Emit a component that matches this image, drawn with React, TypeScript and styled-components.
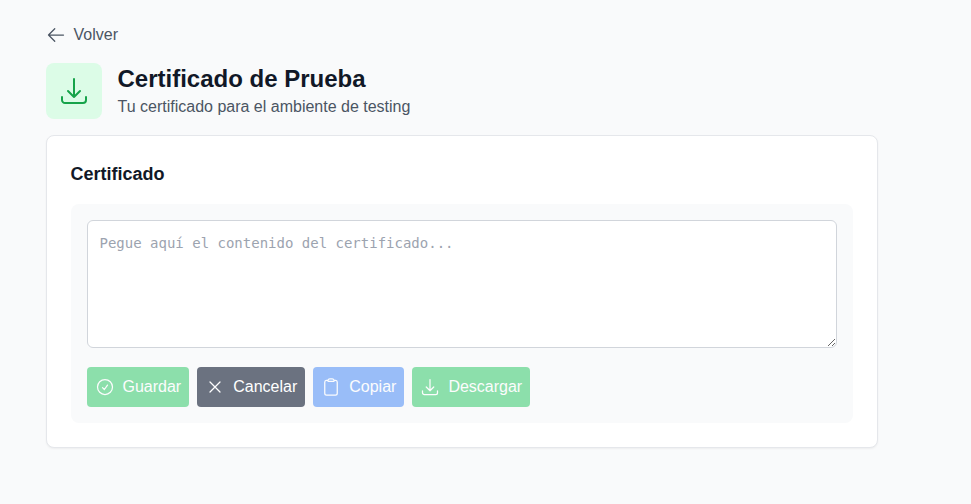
import React from "react";
import styled, { createGlobalStyle } from "styled-components";
import { HiOutlineArrowLeft } from "react-icons/hi2";
import { HiOutlineArrowDownTray, HiOutlineCheckCircle, HiOutlineXMark, HiOutlineClipboard } from "react-icons/hi2";

const GlobalStyle = createGlobalStyle`
  *, *::before, *::after { box-sizing: border-box; }
  body { margin: 0; background: #f9fafb; font-family: "Liberation Sans", Arial, sans-serif; font-size: 16px; line-height: 24px; color: #111827; }
  h1, h2, p { margin: 0; }
`;
const Page = styled.main`
  width: 832px;
  min-height: 504px;
  margin-left: 45.5px;
  padding-top: 23px;
`;
const BackButton = styled.button`
  display: flex;
  align-items: center;
  gap: 8px;
  padding: 0;
  margin-bottom: 16px;
  border: 0;
  background: none;
  color: #4b5563;
  font: inherit;
  svg { width: 20px; height: 20px; stroke-width: 1.5; }
`;
const Header = styled.header`
  display: flex;
  align-items: center;
  gap: 16px;
  margin-bottom: 16px;
`;
const IconTile = styled.div`
  display: grid;
  place-items: center;
  width: 56px;
  height: 56px;
  border-radius: 8px;
  background: #dcfce7;
  color: #16a34a;
  svg { width: 32px; height: 32px; }
`;
const Title = styled.h1`
  font-size: 24px;
  line-height: 32px;
  font-weight: 700;
`;
const Subtitle = styled.p`
  color: #4b5563;
`;
const Card = styled.section`
  padding: 24px;
  border: 1px solid #e5e7eb;
  border-radius: 8px;
  background: #fff;
  box-shadow: 0 1px 2px rgba(0, 0, 0, 0.05);
`;
const CardTitle = styled.h2`
  margin-bottom: 16px;
  font-size: 18px;
  line-height: 28px;
  font-weight: 600;
`;
const Panel = styled.div`
  padding: 16px;
  border-radius: 8px;
  background: #f9fafb;
`;
const CertificateInput = styled.textarea`
  display: block;
  width: 100%;
  height: 128px;
  padding: 12px;
  border: 1px solid #d1d5db;
  border-radius: 6px;
  background: #fff;
  font-family: "DejaVu Sans Mono", monospace;
  font-size: 14px;
  line-height: 20px;
  resize: vertical;
  &::placeholder { color: #9ca3af; opacity: 1; }
`;
const Actions = styled.div`
  display: flex;
  gap: 8px;
  margin-top: 19px;
`;
const ActionButton = styled.button<{ $color: string }>`
  display: flex;
  align-items: center;
  gap: 8px;
  height: 40px;
  padding: 8px;
  border: 0;
  border-radius: 4px;
  background: ${({ $color }) => $color};
  color: #fff;
  font: inherit;
  &:disabled { opacity: 0.5; }
  svg { width: 20px; height: 20px; }
`;

export default function App() {
  return (
    <>
      <GlobalStyle />
      <Page>
        <BackButton><HiOutlineArrowLeft />Volver</BackButton>
        <Header>
          <IconTile><HiOutlineArrowDownTray /></IconTile>
          <div>
            <Title>Certificado de Prueba</Title>
            <Subtitle>Tu certificado para el ambiente de testing</Subtitle>
          </div>
        </Header>
        <Card>
          <CardTitle>Certificado</CardTitle>
          <Panel>
            <CertificateInput placeholder="Pegue aquí el contenido del certificado..." />
            <Actions>
              <ActionButton $color="#22c55e" disabled><HiOutlineCheckCircle />Guardar</ActionButton>
              <ActionButton $color="#6b7280"><HiOutlineXMark />Cancelar</ActionButton>
              <ActionButton $color="#3b82f6" disabled><HiOutlineClipboard />Copiar</ActionButton>
              <ActionButton $color="#22c55e" disabled><HiOutlineArrowDownTray />Descargar</ActionButton>
            </Actions>
          </Panel>
        </Card>
      </Page>
    </>
  );
}
